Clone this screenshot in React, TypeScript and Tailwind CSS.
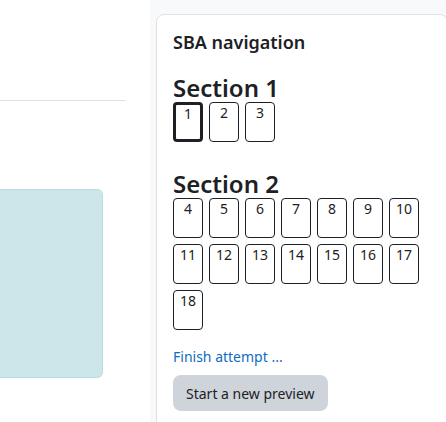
import React from "react";

const sections = [
  { title: "Section 1", questions: [1, 2, 3] },
  { title: "Section 2", questions: [4, 5, 6, 7, 8, 9, 10, 11, 12, 13, 14, 15, 16, 17, 18] },
];

const QuestionBox = ({ n, current }: { n: number; current?: boolean }) => (
  <a
    href="#"
    className={`w-[30px] h-[40px] rounded-[4px] border-[#1d2125] bg-white text-[14px] leading-[14px] text-[#1d2125] flex justify-center ${
      current ? "border-[3px] pt-[2px]" : "border pt-[3px]"
    }`}
  >
    {n}
  </a>
);

export default function App() {
  return (
    <div
      className="w-[446px] h-[422px] overflow-hidden flex bg-white text-[#1d2125]"
      style={{ fontFamily: '"Noto Sans", "Open Sans", sans-serif' }}
    >
      {/* Main content (cut off) */}
      <div className="w-[150px] shrink-0">
        <div className="mt-[100px] w-[126px] border-t border-[#dee2e6]" />
        <div className="mt-[88px] w-[103px] h-[189px] rounded-r-[6px] border border-l-0 border-[#b8dce2] bg-[#cce6ea]" />
      </div>

      {/* Drawer */}
      <div className="flex-1 bg-[#f8f9fa] pl-[6px] pt-[14px]">
        <div className="w-[292px] h-[420px] rounded-lg border border-[#dee2e6] bg-white pl-[16px] pt-[16px]">
          <h2 className="text-[18px] font-semibold leading-[22px]">SBA navigation</h2>

          {sections.map((s, i) => (
            <div key={s.title} className={i === 0 ? "mt-[21px]" : "mt-[28px]"}>
              <h3 className="text-[24px] font-semibold leading-[28px]">{s.title}</h3>
              <div className="flex flex-wrap gap-[6px] w-[252px]">
                {s.questions.map((q) => (
                  <QuestionBox key={q} n={q} current={q === 1} />
                ))}
              </div>
            </div>
          ))}

          <a href="#" className="block mt-[16px] text-[14px] leading-[21px] text-[#0f6cbf]">
            Finish attempt ...
          </a>
          <button className="mt-[8px] h-[36px] px-[13px] rounded-[8px] bg-[#ced4da] text-[14px] text-[#1d2125]">
            Start a new preview
          </button>
        </div>
      </div>
    </div>
  );
}
